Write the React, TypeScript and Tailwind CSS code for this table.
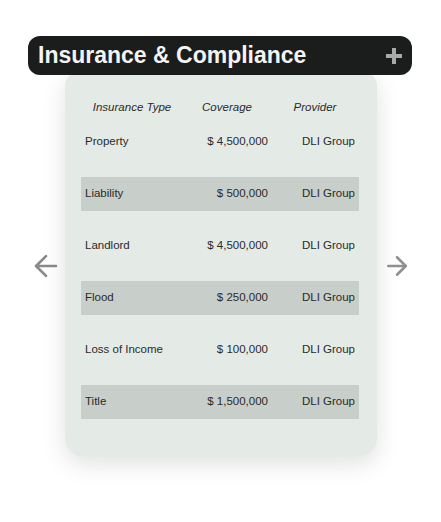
import { ArrowLeft, ArrowRight } from 'lucide-react'

const rows = [
  { type: 'Property', coverage: '$ 4,500,000', provider: 'DLI Group' },
  { type: 'Liability', coverage: '$ 500,000', provider: 'DLI Group' },
  { type: 'Landlord', coverage: '$ 4,500,000', provider: 'DLI Group' },
  { type: 'Flood', coverage: '$ 250,000', provider: 'DLI Group' },
  { type: 'Loss of Income', coverage: '$ 100,000', provider: 'DLI Group' },
  { type: 'Title', coverage: '$ 1,500,000', provider: 'DLI Group' },
]

export default function App() {
  return (
    <div
      className="h-[522px] w-[441px] bg-white pt-[36px]"
      style={{ fontFamily: '"Liberation Sans", Arial, sans-serif' }}
    >
      {/* Title bar */}
      <div className="relative z-10 ml-[28px] flex h-[39px] w-[384px] items-center justify-between rounded-[12px] bg-[#1b1c1c] pl-[10px] pr-[10px]">
        <h1 className="text-[23px] font-bold leading-none text-[#f4f4f4]">
          Insurance &amp; Compliance
        </h1>
        <svg width="16" height="16" viewBox="0 0 16 16">
          <rect x="6" y="0" width="4" height="16" fill="#a9a9a9" />
          <rect x="0" y="6" width="16" height="4" fill="#a9a9a9" />
        </svg>
      </div>

      <div className="flex items-center">
        <div className="w-[65px] pl-[29px]">
          <ArrowLeft size={34} strokeWidth={1.9} color="#8a8a8a" />
        </div>

        {/* Card */}
        <div className="-mt-[3px] w-[312px] rounded-b-[18px] rounded-t-[14px] bg-[#e4eae5] pb-[37px] pl-[16px] pr-[18px] pt-[19px] shadow-[0_8px_24px_rgba(0,0,0,0.12)]">
          <div className="grid h-[34px] grid-cols-[102px_88px_88px] items-center text-[11.5px] italic text-[#2a2a2a]">
            <span className="text-center">Insurance Type</span>
            <span className="text-center">Coverage</span>
            <span className="text-center">Provider</span>
          </div>
          <div className="flex flex-col gap-[18px]">
            {rows.map((r, i) => (
              <div
                key={r.type}
                className={`grid h-[34px] grid-cols-[102px_88px_88px] items-center text-[11.5px] text-[#2a2a2a] ${
                  i % 2 === 1 ? 'bg-[#c8cec9]' : ''
                }`}
              >
                <span className="pl-[4px]">{r.type}</span>
                <span className="pr-[3px] text-right">{r.coverage}</span>
                <span className="pr-[4px] text-right">{r.provider}</span>
              </div>
            ))}
          </div>
        </div>

        <div className="ml-[5px]">
          <ArrowRight size={30} strokeWidth={2} color="#8f8f8f" />
        </div>
      </div>
    </div>
  )
}
